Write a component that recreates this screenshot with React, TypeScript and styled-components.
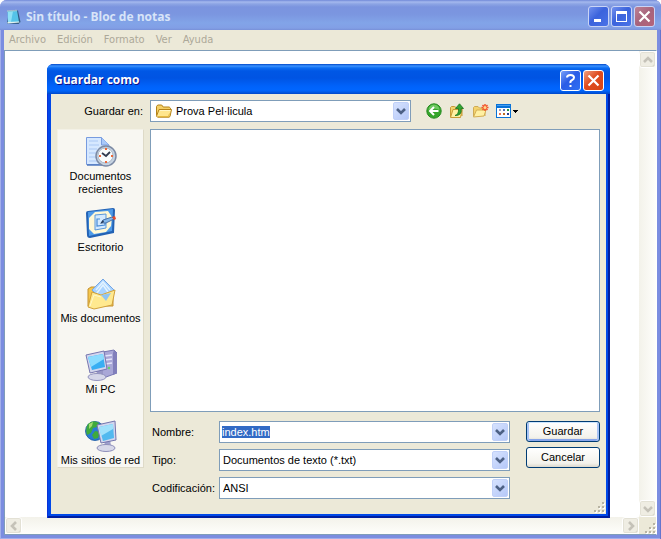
import React, { useEffect, useRef } from "react";
import styled, { createGlobalStyle, css } from "styled-components";

const GlobalStyle = createGlobalStyle`
  *, *::before, *::after { box-sizing: border-box; }
  html, body, #root { height: 100%; }
  body { margin: 0; background: #fff; overflow: hidden; }
  body, button, input, select, textarea { font: 11px/13px "Liberation Sans", Arial, sans-serif; color: #000; }
  button { padding: 0; cursor: default; }
  svg { display: block; flex: none; }
`;

/* ---------- main window ---------- */
const Window = styled.div`
  position: relative;
  height: 100%;
  display: flex;
  flex-direction: column;
  padding: 0 4px 4px;
  border-radius: 7px 7px 0 0;
  background: #7b8de0;
  box-shadow: inset 1px 0 #a3afea, inset -1px 0 #6575cd, inset 0 -1px #a3afea;
`;

const TitleBar = styled.header<{ $active?: boolean }>`
  display: flex;
  align-items: center;
  gap: 5px;
  flex: none;
  height: 30px;
  margin: 0 -4px;
  color: #d8e4f8;
  font: bold 12px/18px "Open Sans", "Noto Sans", sans-serif;
  ${(p) =>
    p.$active
      ? css`
          padding: 2px 6px 0 7px;
          color: #fff;
          text-shadow: 1px 1px #0f1089;
          border-radius: 6px 6px 0 0;
          background: linear-gradient(#0148c8 0, #3c93ff 2px, #0c6df2 4px, #0057e5 7px, #0054e3 14px, #0062fa 22px, #0066ff 26px, #005be8 28px, #0047c8 30px);
        `
      : css`
          padding: 3px 6px 0 5px;
          border-radius: 7px 7px 0 0;
          background: linear-gradient(#7189d8 0, #a5b9ee 2px, #8ca4e4 4px, #7b94df 7px, #7b96e0 14px, #82a4e8 23px, #829fe6 28px, #7890d8 30px);
        `}
`;

const TitleText = styled.h1`
  flex: 1;
  margin: 0;
  font: inherit;
`;

const CaptionButtons = styled.div`
  display: flex;
  gap: 2px;
`;

const captionColors = {
  idle: "linear-gradient(135deg, #7291ee, #3b63dc 45%, #4a73e8)",
  idleClose: "linear-gradient(135deg, #bd8295, #a7637c 50%, #b5647a)",
  help: "linear-gradient(135deg, #7aa0f8, #2a5ce6 45%, #2e70f4)",
  close: "linear-gradient(135deg, #f0a080, #df4c20 45%, #d84514)",
};

const CaptionButton = styled.button<{ $kind: keyof typeof captionColors }>`
  display: grid;
  place-items: center;
  width: 21px;
  height: 21px;
  border: 1px solid ${(p) => (p.$kind.startsWith("idle") ? "#c9d4f6" : "#fff")};
  border-radius: 3px;
  background: ${(p) => captionColors[p.$kind]};
`;

const MenuBar = styled.nav`
  display: flex;
  flex: none;
  gap: 11px;
  height: 20px;
  padding: 0 5px 2px;
  background: #ece9d8;
`;

const MenuItem = styled.button`
  border: 0;
  background: none;
  color: #aca899;
  font: 11px/13px "DejaVu Sans Condensed", "Noto Sans", sans-serif;
`;

const Editor = styled.main`
  flex: 1;
  min-height: 0;
  display: grid;
  grid-template: 1fr 17px / 1fr 17px;
  border: 1px solid #7f9db9;
  border-right-color: #fff;
  background: #fff;
`;

const Page = styled.textarea`
  border: 0;
  padding: 2px;
  outline: 0;
  resize: none;
  background: #fff;
`;

const ScrollTrack = styled.div<{ $horizontal?: boolean }>`
  display: flex;
  justify-content: space-between;
  flex-direction: ${(p) => (p.$horizontal ? "row" : "column")};
  background: linear-gradient(${(p) => (p.$horizontal ? "180deg" : "90deg")}, #f3f2ea, #fefefb);
`;

const ScrollButton = styled.button`
  display: grid;
  place-items: center;
  width: 17px;
  height: 17px;
  border: 1px solid #fff;
  border-radius: 3px;
  background: #efede3;
  box-shadow: inset 0 0 0 1px #e3e1d5, inset -1px -1px #cfccbd;
`;

const GripCorner = styled.div`
  display: flex;
  align-items: flex-end;
  justify-content: flex-end;
  background: #ece9d8;
`;

/* ---------- dialog ---------- */
const Dialog = styled.section`
  position: absolute;
  top: 64px;
  right: 51px;
  bottom: 21px;
  left: 47px;
  display: flex;
  flex-direction: column;
  padding: 0 4px 4px;
  border-radius: 7px 7px 0 0;
  background: #0048e8;
  box-shadow: inset 1px 0 #0831d9, inset -2px 0 #001ea0, inset 0 -2px #001ea0;
`;

const DialogBody = styled.form`
  position: relative;
  flex: 1;
  min-height: 0;
  display: grid;
  grid-template-columns: 87px 1fr;
  grid-template-rows: 22px 1fr;
  gap: 7px 6px;
  padding: 6px 6px 15px;
  background: #ece9d8;
`;

const LookIn = styled.div`
  grid-column: 1 / -1;
  display: grid;
  grid-template-columns: 87px minmax(0, 261px) 1fr;
  column-gap: 6px;
  align-items: center;
`;

const Label = styled.label<{ $right?: boolean }>`
  padding: ${(p) => (p.$right ? "0 1px 0 0" : "0 0 0 2px")};
  text-align: ${(p) => (p.$right ? "right" : "left")};
  white-space: nowrap;
`;

const Combo = styled.div`
  display: grid;
  grid-template-columns: auto 1fr 16px;
  align-items: center;
  height: 22px;
  padding: 1px;
  border: 1px solid #7f9db9;
  background: #fff;
`;

const comboText = css`
  grid-row: 1;
  width: 100%;
  border: 0;
  outline: 0;
  background: transparent;
  appearance: none;
`;

const ComboSelect = styled.select`
  ${comboText}
  grid-column: 2 / -1;
  height: 18px;
  padding: 0 18px 0 2px;
`;

const ComboInput = styled.input`
  ${comboText}
  grid-column: 2;
  height: 14px;
  padding: 0 1px;
  &::selection { background: #316ac5; color: #fff; }
`;

const ComboArrow = styled.span`
  grid-row: 1;
  grid-column: 3;
  display: grid;
  place-items: center;
  height: 18px;
  border-radius: 2px;
  border: 1px solid #c0d0f8;
  background: linear-gradient(135deg, #d6e2fe, #b5c8f8);
  pointer-events: none;
`;

const ComboIcon = styled.span`
  grid-row: 1;
  grid-column: 1;
  padding: 0 1px 0 3px;
`;

const Tools = styled.div`
  display: flex;
  gap: 7px;
  padding-left: 9px;
`;

const ToolButton = styled.button`
  display: flex;
  align-items: center;
  border: 0;
  background: none;
`;

const Places = styled.nav`
  align-self: start;
  padding: 6px 0 0;
  border: 1px solid;
  border-color: #f3f1e6 #dedac8 #dedac8 #f3f1e6;
  background: #f8f7f2;
`;

const Place = styled.button`
  display: flex;
  flex-direction: column;
  align-items: center;
  justify-content: flex-start;
  gap: 2px;
  width: 100%;
  height: 71px;
  border: 0;
  background: none;
  white-space: pre-line;
  &:last-child { height: 47px; }
`;

const Main = styled.div`
  display: flex;
  flex-direction: column;
  gap: 9px;
  min-width: 0;
`;

const FileList = styled.div`
  flex: 1;
  border: 1px solid #7f9db9;
  background: #fff;
`;

const FieldColumns = styled.div`
  display: grid;
  grid-template-columns: 1fr 74px;
  gap: 16px;
`;

const FieldRows = styled.div`
  display: flex;
  flex-direction: column;
  gap: 6px;
`;

const Field = styled.div`
  display: grid;
  grid-template-columns: 69px 1fr;
  align-items: center;
`;

const ActionButton = styled.button<{ $default?: boolean }>`
  height: 21px;
  border: 1px solid #003c74;
  border-radius: 3px;
  background: linear-gradient(#fff, #f3f2ec 80%, #dcd8cc);
  box-shadow: ${(p) => (p.$default ? "inset 0 1px #cee7ff, inset 2px 0 #a9c4f5, inset -2px 0 #a9c4f5, inset 0 -2px #86a4ea" : "none")};
`;

const Actions = styled.div`
  display: flex;
  flex-direction: column;
  gap: 5px;
`;

const DialogGrip = styled.div`
  position: absolute;
  right: 1px;
  bottom: 1px;
`;

/* ---------- icons ---------- */
const Chevron = ({ turn = 0, color = "#4d6185" }: { turn?: number; color?: string }) => (
  <svg width="10" height="10" viewBox="0 0 10 10" aria-hidden="true">
    <path d="M1 3 5 7 9 3" transform={`rotate(${turn} 5 5)`} fill="none" stroke={color} strokeWidth="2.6" />
  </svg>
);

const Grip = () => (
  <svg width="12" height="12" viewBox="0 0 12 12" aria-hidden="true" shapeRendering="crispEdges">
    {[[9, 1], [5, 5], [9, 5], [1, 9], [5, 9], [9, 9]].map(([x, y]) => (
      <g key={`${x}-${y}`}>
        <rect x={x + 1} y={y + 1} width="2" height="2" fill="#fff" />
        <rect x={x} y={y} width="2" height="2" fill="#b8b4a3" />
      </g>
    ))}
  </svg>
);

const NotepadIcon = () => (
  <svg width="16" height="16" viewBox="0 0 16 16" aria-hidden="true">
    <path d="m4 2 9-.5L15.500 13l-2 2L2 14.500z" fill="#315b83" />
    <path d="m2.500 2 9.500-.5 2 11.500-11 .5z" fill="#55c3e8" />
    <path d="m3 3 5-.5L6 13H3z" fill="#8fe0f6" />
    <path d="m2.500 13 11.500-.5.5 1-12 1z" fill="#e3f4ef" />
    <path d="M2.500 2 12 1.500" stroke="#d7dcc2" strokeWidth="1.500" strokeDasharray="1 1" />
  </svg>
);

const FolderIcon = () => (
  <svg width="18" height="16" viewBox="0 0 18 16" aria-hidden="true">
    <path d="M1.500 12.500v-9l1.200-1.500h4l1.500 2h6l1.300 1.200V8" fill="#f5d067" stroke="#b58318" />
    <path d="M4 6.500h12.500l-1.500 7-1 .7H2.500l-1-1z" fill="#ffe68d" stroke="#b58318" strokeLinejoin="round" />
    <path d="M5 7.500h10.500" stroke="#fff7c8" />
    <path d="M3 13.500h10.500l1-3" fill="none" stroke="#e5b93e" />
  </svg>
);

const BackIcon = () => (
  <svg width="16" height="16" viewBox="0 0 16 16" aria-hidden="true">
    <circle cx="8" cy="8" r="7.200" fill="#36a52b" stroke="#258b20" />
    <path d="M2.500 7a5.500 5.500 0 0 1 11 0Q8 4 2.500 7" fill="#87d779" opacity=".7" />
    <path d="M12.500 8H4.500M8 4 4 8l4 4" fill="none" stroke="#fff" strokeWidth="2" />
  </svg>
);

const UpIcon = () => (
  <svg width="16" height="16" viewBox="0 0 16 16" aria-hidden="true">
    <path d="M1.500 14V4.500l1-1h3l1.500 1h6V13" fill="#f4d36d" stroke="#c79b37" />
    <path d="m1.500 14.500 2.500-8h9l-1.500 8z" fill="#fff0a2" stroke="#c79b37" />
    <path d="M6 12.500q4-1 3.500-7H6.500L10.500.8l4 4.700h-2.300Q13 13 6 12.500z" fill="#33a532" stroke="#187321" strokeWidth=".8" />
  </svg>
);

const NewFolderIcon = () => (
  <svg width="17" height="16" viewBox="0 0 17 16" aria-hidden="true">
    <path d="M1.500 13.500v-9l1-1H6l1.500 1.500H13v8" fill="#f4d36d" stroke="#ceaa55" />
    <path d="m1.500 14 3-7H14l-2 6z" fill="#fff0a2" stroke="#d3ae55" />
    <path d="M13 1v7M9.500 4.500h7M10.500 2l5 5M15.500 2l-5 5" stroke="#f2552d" strokeWidth="1.500" />
    <circle cx="13" cy="4.500" r="1.500" fill="#ffd98c" />
  </svg>
);

const ViewIcon = () => (
  <svg width="23" height="16" viewBox="0 0 23 16" aria-hidden="true" shapeRendering="crispEdges">
    <path d="M0 1h15v14H0z" fill="#0872d8" />
    <path d="M1 5h13v9H1z" fill="#fff" />
    <path d="M1 2h13v1H1z" fill="#459ef0" />
    <path d="M3 6h2v2H3z" fill="#9d9db5" />
    <path d="M7 6h2v2H7z" fill="#5a6cb5" />
    <path d="M11 6h2v2h-2z" fill="#249543" />
    <path d="M3 10h2v2H3z" fill="#ec714a" />
    <path d="M7 10h2v2H7z" fill="#bb6d26" />
    <path d="M11 10h2v2h-2z" fill="#293e94" />
    <path d="M17 7h5v1h-1v1h-1v1h-1V9h-1V8h-1z" fill="#000" />
  </svg>
);

const RecentIcon = () => (
  <svg width="32" height="32" viewBox="0 0 32 32" aria-hidden="true">
    <path d="M1.500 1.500h15L24 9v19.500H1.500z" fill="#d6e8ff" stroke="#779bdf" />
    <path d="M16.500 1.500V9H24" fill="#a9c9fa" stroke="#7b9ee0" />
    <path d="M4 5h9M4 9h10M4 13h8M4 17h7M4 21h7M4 25h9" stroke="#aac8f4" />
    <path d="M2 29h21" stroke="#527abf" strokeWidth="1.500" />
    <circle cx="21" cy="20" r="10" fill="#c6d3e2" stroke="#7d8ba5" strokeWidth="1.500" />
    <circle cx="20.500" cy="19.500" r="7.500" fill="#f8fcfd" stroke="#aeb9c6" />
    <path d="m17 17 4 3 4-4" fill="none" stroke="#303b50" strokeWidth="1.800" />
    <path d="M20 13h2M20 26h2M14 20h2M26 20h2" stroke="#ec693a" strokeWidth="2" />
  </svg>
);

const DesktopIcon = () => (
  <svg width="32" height="32" viewBox="0 0 32 32" aria-hidden="true">
    <path d="m3 4 25-3q2 0 2 2l-1 23-24 5q-3 0-3-3L1 6q0-2 2-2" fill="#2362b4" />
    <path d="m3 5 25-3-1 22-23 5z" fill="#4e9be9" />
    <path d="m10 5 13-1 4 6-1 9-5 6-12 2-5-5V11z" fill="#fff8d5" />
    <path d="m10 8 11-1v14l-11 2z" fill="#d3eaff" stroke="#5a98d9" />
    <path d="M15 12h-3v7l8-1v-2" fill="none" stroke="#478bd5" strokeWidth="1.200" />
    <path d="m16 16 2-3 9-3 2 2-8 4z" fill="#82b7ea" stroke="#315b99" strokeWidth=".8" />
    <path d="m27 10 3-1 1 3-2 1z" fill="#e44b2d" />
    <path d="m15 17 3-4 1 2z" fill="#253650" />
  </svg>
);

const DocumentsIcon = () => (
  <svg width="32" height="32" viewBox="0 0 32 32" aria-hidden="true">
    <path d="M3 28V11l3-2h7l3 4 12-1v16z" fill="#f5c64d" stroke="#c49130" />
    <path d="M7 12 18 1l11 11-9 13z" fill="#a9d3ff" stroke="#75a6e4" />
    <path d="m11 12 7-8 7 8M12 15l6-8 5 7" fill="none" stroke="#e3f3ff" strokeWidth="1.500" />
    <path d="m3 29 4-15 9 3 14-5-3 15-18 4z" fill="#ffe98f" stroke="#d1a13b" strokeLinejoin="round" />
    <path d="m16 17 10-2-5 8z" fill="#8fc4f2" />
    <path d="m5 28 4-11 7 2" fill="none" stroke="#fff8ca" />
  </svg>
);

const ComputerIcon = () => (
  <svg width="32" height="32" viewBox="0 0 32 32" aria-hidden="true">
    <path d="m18 3 11-2 3 3v20l-11 4-4-3z" fill="#a9a7d7" stroke="#7776b3" />
    <path d="m29 1 3 3v20l-4 2V4z" fill="#817fbb" />
    <path d="m20 7 7-1M20 11l7-1M20 15l7-1" stroke="#e4e4fa" strokeWidth="1.500" />
    <circle cx="24" cy="19" r="1.200" fill="#63d46b" />
    <path d="m12 21 6-1v6l-7 1z" fill="#9795c5" />
    <ellipse cx="12" cy="28" rx="9" ry="3.500" fill="#d5d6e9" stroke="#9292be" />
    <path d="m1 6 18-4 3 18-17 4z" fill="#d2d6ee" stroke="#7776b0" strokeLinejoin="round" />
    <path d="m3 8 15-3 2 13-13 3z" fill="#38aef3" />
    <path d="m3 8 15-3 1 5L6 18z" fill="#8bdcff" />
  </svg>
);

const NetworkIcon = () => (
  <svg width="32" height="32" viewBox="0 0 32 32" aria-hidden="true">
    <circle cx="10" cy="11" r="9.500" fill="#287bd3" stroke="#1556a1" strokeWidth=".8" />
    <path d="M3 4q5-5 11-1l-2 4-4 1-2 5-4 2Q0 9 3 4M10 11l5 1-2 6-4 1-2-4z" fill="#3faa3c" />
    <path d="m4 4 4-2-1 4-3 3z" fill="#a4db73" />
    <path d="m19 19 6-1 1 9h-6z" fill="#9d9ecb" />
    <ellipse cx="21" cy="28" rx="9" ry="3.500" fill="#d7d8e9" stroke="#8e8fba" />
    <path d="m12 5 18-4 1 19-15 3z" fill="#d2d6ee" stroke="#7475ad" strokeLinejoin="round" />
    <path d="m14 7 14-3 1 14-11 3z" fill="#52b9ef" />
    <path d="m14 7 14-3v5l-12 7z" fill="#a0e1fb" />
  </svg>
);

const Cross = () => (
  <svg width="13" height="13" viewBox="0 0 13 13" aria-hidden="true">
    <path d="m1.500 1.500 10 10m0-10-10 10" stroke="#fff" strokeWidth="2.200" />
  </svg>
);

const menus = ["Archivo", "Edición", "Formato", "Ver", "Ayuda"];

const places = [
  { label: "Documentos\nrecientes", Icon: RecentIcon },
  { label: "Escritorio", Icon: DesktopIcon },
  { label: "Mis documentos", Icon: DocumentsIcon },
  { label: "Mi PC", Icon: ComputerIcon },
  { label: "Mis sitios de red", Icon: NetworkIcon },
];

const Arrow = () => (
  <ComboArrow>
    <Chevron />
  </ComboArrow>
);

function SaveDialog() {
  const nameRef = useRef<HTMLInputElement>(null);
  useEffect(() => {
    nameRef.current?.focus();
    nameRef.current?.select();
  }, []);

  return (
    <Dialog role="dialog" aria-labelledby="save-title">
      <TitleBar $active>
        <TitleText as="h2" id="save-title">Guardar como</TitleText>
        <CaptionButtons>
          <CaptionButton $kind="help" aria-label="Ayuda">
            <svg width="13" height="15" viewBox="0 0 13 15" aria-hidden="true">
              <path d="M3 4.500Q3 2 6.500 2T10 4.500Q10 6 8 7.200T6.500 10" fill="none" stroke="#fff" strokeWidth="2" />
              <path d="M5.500 12h2v2h-2z" fill="#fff" />
            </svg>
          </CaptionButton>
          <CaptionButton $kind="close" aria-label="Cerrar"><Cross /></CaptionButton>
        </CaptionButtons>
      </TitleBar>
      <DialogBody onSubmit={(e) => e.preventDefault()}>
        <LookIn>
          <Label $right htmlFor="folder">Guardar en:</Label>
          <Combo>
            <ComboIcon><FolderIcon /></ComboIcon>
            <ComboSelect id="folder"><option>Prova Pel·licula</option></ComboSelect>
            <Arrow />
          </Combo>
          <Tools>
            <ToolButton type="button" aria-label="Atrás"><BackIcon /></ToolButton>
            <ToolButton type="button" aria-label="Subir un nivel"><UpIcon /></ToolButton>
            <ToolButton type="button" aria-label="Crear nueva carpeta"><NewFolderIcon /></ToolButton>
            <ToolButton type="button" aria-label="Ver menú"><ViewIcon /></ToolButton>
          </Tools>
        </LookIn>
        <Places>
          {places.map(({ label, Icon }) => (
            <Place type="button" key={label}><Icon />{label}</Place>
          ))}
        </Places>
        <Main>
          <FileList />
          <FieldColumns>
            <FieldRows>
              <Field>
                <Label htmlFor="name">Nombre:</Label>
                <Combo><ComboInput id="name" ref={nameRef} defaultValue="index.htm" /><Arrow /></Combo>
              </Field>
              <Field>
                <Label htmlFor="type">Tipo:</Label>
                <Combo>
                  <ComboSelect id="type"><option>Documentos de texto (*.txt)</option></ComboSelect>
                  <Arrow />
                </Combo>
              </Field>
              <Field>
                <Label htmlFor="encoding">Codificación:</Label>
                <Combo>
                  <ComboSelect id="encoding"><option>ANSI</option></ComboSelect>
                  <Arrow />
                </Combo>
              </Field>
            </FieldRows>
            <Actions>
              <ActionButton type="submit" $default>Guardar</ActionButton>
              <ActionButton type="button">Cancelar</ActionButton>
            </Actions>
          </FieldColumns>
        </Main>
        <DialogGrip><Grip /></DialogGrip>
      </DialogBody>
    </Dialog>
  );
}

export default function App() {
  return (
    <>
      <GlobalStyle />
      <Window>
        <TitleBar>
          <NotepadIcon />
          <TitleText>Sin título - Bloc de notas</TitleText>
          <CaptionButtons>
            <CaptionButton $kind="idle" aria-label="Minimizar">
              <svg width="13" height="13" viewBox="0 0 13 13" aria-hidden="true"><path d="M2 9h7v3H2z" fill="#fff" /></svg>
            </CaptionButton>
            <CaptionButton $kind="idle" aria-label="Maximizar">
              <svg width="13" height="13" viewBox="0 0 13 13" aria-hidden="true"><path d="M1 1h11v11H1zm1 3v7h9V4z" fill="#fff" fillRule="evenodd" /></svg>
            </CaptionButton>
            <CaptionButton $kind="idleClose" aria-label="Cerrar"><Cross /></CaptionButton>
          </CaptionButtons>
        </TitleBar>
        <MenuBar>
          {menus.map((m) => <MenuItem key={m}>{m}</MenuItem>)}
        </MenuBar>
        <Editor>
          <Page aria-label="Texto" />
          <ScrollTrack>
            <ScrollButton aria-label="Arriba"><Chevron turn={180} color="#c5c2b8" /></ScrollButton>
            <ScrollButton aria-label="Abajo"><Chevron color="#c5c2b8" /></ScrollButton>
          </ScrollTrack>
          <ScrollTrack $horizontal>
            <ScrollButton aria-label="Izquierda"><Chevron turn={90} color="#c5c2b8" /></ScrollButton>
            <ScrollButton aria-label="Derecha"><Chevron turn={-90} color="#c5c2b8" /></ScrollButton>
          </ScrollTrack>
          <GripCorner><Grip /></GripCorner>
        </Editor>
        <SaveDialog />
      </Window>
    </>
  );
}
